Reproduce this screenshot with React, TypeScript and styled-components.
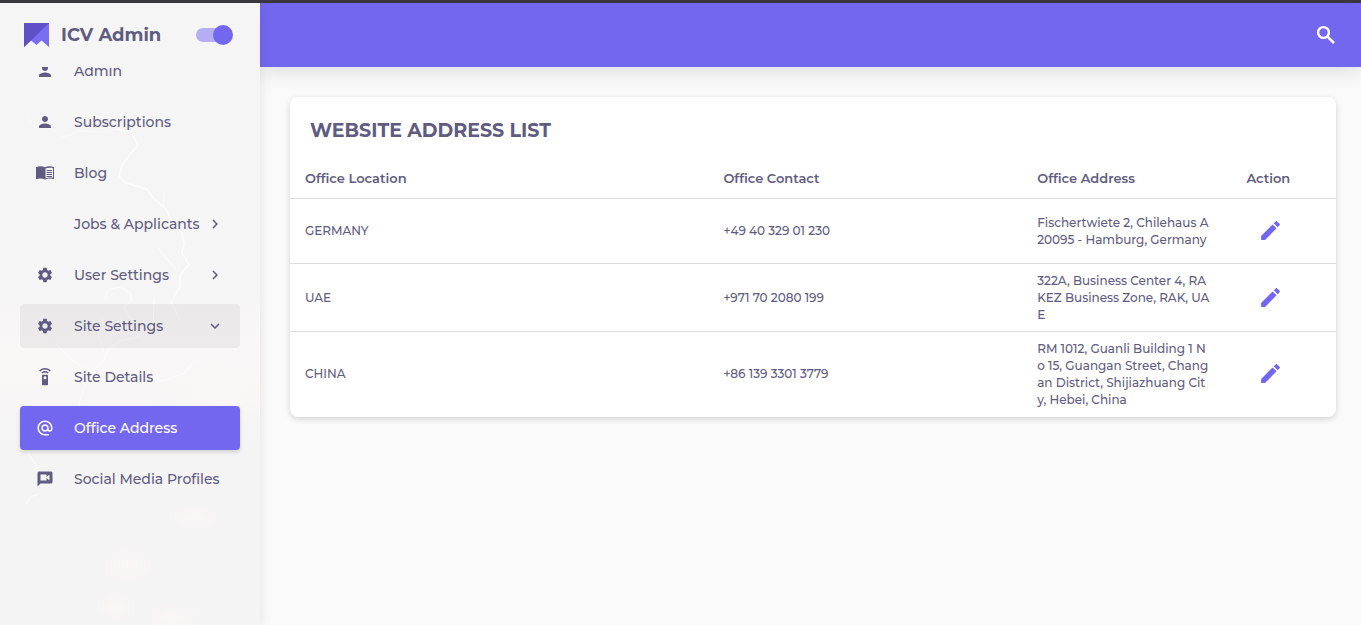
import React, { useState } from "react";
import styled, { createGlobalStyle, css } from "styled-components";
import {
  MdAlternateEmail,
  MdChevronRight,
  MdExpandMore,
  MdPerson,
  MdSettings,
} from "react-icons/md";

const violet = "#7467ef";
const ink = "#605c81";

const GlobalStyle = createGlobalStyle`
  *, *::before, *::after { box-sizing: border-box; }
  body {
    margin: 0;
    background: #fafafa;
    color: ${ink};
    font-family: Montserrat, Inter, "Open Sans", sans-serif;
    font-size: 13px;
  }
`;

const Page = styled.div`
  display: flex;
  min-height: 100vh;
  border-top: 3px solid #3b3a3e;
`;

const Sidebar = styled.aside`
  position: relative;
  flex: 0 0 260px;
  display: flex;
  flex-direction: column;
  overflow: hidden;
  background: #f5f5f5;
`;

const SidebarShell = styled.div`
  position: relative;
  z-index: 3;
  display: flex;
  flex: 0 0 260px;
  box-shadow: 0 2px 12px rgba(0, 0, 0, 0.1);
`;

const Backdrop = styled.svg`
  position: absolute;
  inset: 0;
  width: 100%;
  height: 100%;
`;

const Brand = styled.div`
  position: relative;
  display: flex;
  align-items: center;
  height: 64px;
  padding: 0 27px 0 24px;
`;

const BrandName = styled.span`
  flex: 1;
  padding-left: 12px;
  font-size: 18px;
  font-weight: 700;
  line-height: 24px;
`;

const Toggle = styled.input`
  appearance: none;
  position: relative;
  display: flex;
  align-items: center;
  width: 37px;
  height: 20px;
  margin: 0;
  cursor: pointer;

  &::before {
    content: "";
    width: 34px;
    height: 14px;
    border-radius: 7px;
    background: #b6aef2;
  }
  &::after {
    content: "";
    position: absolute;
    top: 0;
    left: 0;
    width: 20px;
    height: 20px;
    border-radius: 50%;
    background: ${violet};
  }
  &:checked::after {
    left: auto;
    right: 0;
  }
`;

const Nav = styled.nav`
  position: relative;
  flex: 1;
  overflow: hidden;
`;

const NavList = styled.ul`
  display: flex;
  flex-direction: column;
  gap: 7px;
  margin: -18px 0 0;
  padding: 0 20px;
  list-style: none;
`;

type NavState = "plain" | "open" | "active";

const navItem = css<{ $state: NavState }>`
  display: flex;
  align-items: center;
  width: 100%;
  height: 44px;
  padding: 0 16px;
  border: 0;
  border-radius: 4px;
  background: ${(p) =>
    p.$state === "active" ? violet : p.$state === "open" ? "rgba(0, 0, 0, 0.05)" : "transparent"};
  box-shadow: ${(p) => (p.$state === "active" ? "0 2px 4px rgba(0, 0, 0, 0.15)" : "none")};
  color: ${(p) => (p.$state === "active" ? "#fff" : ink)};
  font: inherit;
  font-size: 14px;
  font-weight: 500;
  line-height: 20px;
  text-align: left;
  text-decoration: none;
  white-space: nowrap;
  cursor: pointer;
`;

const NavLink = styled.a`
  ${navItem}
`;

const NavButton = styled.button`
  ${navItem}
`;

const NavIcon = styled.span`
  display: flex;
  justify-content: center;
  flex: 0 0 18px;
  margin-right: 20px;
`;

const NavLabel = styled.span`
  flex: 1;
`;

const Content = styled.div`
  flex: 1;
  min-width: 0;
`;

const TopBar = styled.header`
  display: flex;
  align-items: center;
  justify-content: flex-end;
  height: 64px;
  padding: 0 11px;
  background: ${violet};
  box-shadow: 0 4px 20px rgba(0, 0, 0, 0.12);
`;

const IconButton = styled.button`
  display: flex;
  align-items: center;
  justify-content: center;
  width: 48px;
  height: 48px;
  padding: 0;
  border: 0;
  border-radius: 50%;
  background: transparent;
  color: ${violet};
  cursor: pointer;
`;

const SearchButton = styled(IconButton)`
  color: #fff;
`;

const Main = styled.main`
  padding: 30px 25px 30px 30px;
`;

const Card = styled.section`
  overflow: hidden;
  border-radius: 8px;
  background: #fff;
  box-shadow: 0 2px 6px rgba(0, 0, 0, 0.16);
`;

const Title = styled.h1`
  margin: 0;
  padding: 20px 20px 13px;
  font-size: 19px;
  font-weight: 700;
  line-height: 28px;
  text-transform: uppercase;
`;

const Table = styled.table`
  width: 100%;
  table-layout: fixed;
  border-collapse: collapse;
  text-align: left;
`;

const HeadCell = styled.th<{ $width: string }>`
  width: ${(p) => p.$width};
  height: 40px;
  padding: 0 15px;
  border-bottom: 1px solid #dcdcdc;
  font-size: 13px;
  font-weight: 600;
`;

const Row = styled.tr`
  border-bottom: 1px solid #dcdcdc;

  &:last-child {
    border-bottom-color: transparent;
  }
`;

const Cell = styled.td`
  height: 65px;
  padding: 8px 15px;
  font-size: 12px;
  font-weight: 500;
  line-height: 17px;
  white-space: nowrap;
`;

const Line = styled.span`
  display: block;
`;

const Logo = () => (
  <svg width="25" height="24" viewBox="0 0 25 24" aria-hidden="true">
    <path d="M0 0H25V24L17.500 17.500L12.500 22L7 17.500L0 24Z" fill="#7b6df2" />
    <path d="M0 0H25L7 17.500L0 24Z" fill="#5f50c8" />
  </svg>
);

const OpenBook = () => (
  <svg width="18" height="14" viewBox="0 0 18 14" fill="currentColor" aria-hidden="true">
    <path d="M0 1.200C2.700 0 6.500 0 9 1.300C11.500 0 15.300 0 18 1.200V13.200C15.300 12.200 11.500 12.400 9 13.400C6.500 12.400 2.700 12.200 0 13.200Z" />
    <path d="M9.500 2.500C12 1.700 14.600 1.600 17 2.200V11.800C14.600 11.300 12 11.400 9.500 12.200Z" fill="#f5f5f5" />
    <path d="M10.500 4.500H16M10.500 6.500H16M10.500 8.500H16M10.500 10.500H16" stroke="currentColor" strokeWidth="1" />
  </svg>
);

const Magnifier = () => (
  <svg width="24" height="24" viewBox="0 0 24 24" fill="none" stroke="currentColor" aria-hidden="true">
    <circle cx="9.500" cy="9.500" r="5.400" strokeWidth="2.400" />
    <path d="M13.600 13.600L20 20" strokeWidth="2.600" />
  </svg>
);

const Pencil = () => (
  <svg width="25" height="25" viewBox="0 0 24 24" fill="currentColor" aria-hidden="true">
    <path d="M3 17.250V21h3.750L17.810 9.940l-3.750-3.750L3 17.250zM20.710 7.040c.39-.39.39-1.020 0-1.410l-2.340-2.340c-.39-.39-1.020-.39-1.410 0l-1.830 1.830 3.750 3.750 1.830-1.830z" />
  </svg>
);

const Remote = () => (
  <svg width="18" height="18" viewBox="0 0 24 24" fill="currentColor" aria-hidden="true">
    <path d="M15 9H9c-.55 0-1 .45-1 1v12c0 .55.45 1 1 1h6c.55 0 1-.45 1-1V10c0-.55-.45-1-1-1zm-3 6c-1.100 0-2-.9-2-2s.9-2 2-2 2 .9 2 2-.9 2-2 2zM7.050 6.050l1.410 1.410C9.370 6.560 10.620 6 12 6s2.630.56 3.540 1.460l1.410-1.410C15.680 4.780 13.930 4 12 4s-3.680.78-4.950 2.050zM12 0C8.960 0 6.210 1.230 4.220 3.220l1.410 1.410C7.260 3.010 9.510 2 12 2s4.740 1.010 6.360 2.640l1.410-1.410C17.790 1.230 15.040 0 12 0z" />
  </svg>
);

const VideoBubble = () => (
  <svg width="18" height="18" viewBox="0 0 24 24" fill="currentColor" aria-hidden="true">
    <path d="M20 2H4c-1.100 0-1.990.9-1.990 2L2 22l4-4h14c1.100 0 2-.9 2-2V4c0-1.100-.9-2-2-2zm-2 12l-4-3.200V14H6V6h8v3.200L18 6v8z" />
  </svg>
);

const Storm = () => (
  <Backdrop viewBox="0 0 260 622" preserveAspectRatio="xMidYMin slice" aria-hidden="true">
    <defs>
      <radialGradient id="glow">
        <stop offset="0" stopColor="#fcf7f6" stopOpacity="0.8" />
        <stop offset="1" stopColor="#fbf6f5" stopOpacity="0" />
      </radialGradient>
      <linearGradient id="haze" x2="0" y2="1">
        <stop offset="0.4" stopColor="#faf7f7" stopOpacity="0" />
        <stop offset="0.58" stopColor="#faf7f7" stopOpacity="0.9" />
        <stop offset="0.72" stopColor="#f4f4f4" />
      </linearGradient>
    </defs>
    <rect width="260" height="622" fill="url(#haze)" />
    <ellipse cx="218" cy="390" rx="70" ry="36" fill="url(#glow)" />
    <ellipse cx="10" cy="365" rx="90" ry="34" fill="url(#glow)" />
    <ellipse cx="128" cy="562" rx="32" ry="24" fill="url(#glow)" />
    <ellipse cx="116" cy="604" rx="24" ry="20" fill="url(#glow)" />
    <ellipse cx="172" cy="614" rx="34" ry="18" fill="url(#glow)" />
    <ellipse cx="195" cy="515" rx="34" ry="16" fill="url(#glow)" />
    <g fill="none" stroke="#fff" strokeLinejoin="round" strokeOpacity="0.7">
      <path
        strokeOpacity="0.4"
        d="M28 114L33 124L50 125L62 134L72 132L76 128L100 129L118 126"
      />
      <path
        strokeWidth="1.500"
        d="M118 126L132 130L138 142L131 150L122 162L119 173L126 180L147 186L153 195L166 206L172 219L182 230L184 240L182 250L189 261L180 272L180 284L174 293L170 302"
      />
      <path d="M104 298L108 287L120 284L130 290L131 298L124 304L128 314L140 320L139 334L120 338L108 346L104 358L92 368L82 364L66 352L54 338M103 312L98 330L104 350M92 368L84 384L80 398L76 412" />
      <path d="M154 297L153 325M172 300L180 318M195 357L184 370L164 378L150 376M28 450L36 462L40 472M26 502L30 494L39 491M158 245L166 255L176 266M120 114L124 108M163 203L165 190" />
    </g>
  </Backdrop>
);

interface NavEntry {
  label: string;
  icon?: React.ReactNode;
  state?: NavState;
  group?: boolean;
}

const navEntries: NavEntry[] = [
  { label: "Admin", icon: <MdPerson size={18} /> },
  { label: "Subscriptions", icon: <MdPerson size={18} /> },
  { label: "Blog", icon: <OpenBook /> },
  { label: "Jobs & Applicants", group: true },
  { label: "User Settings", icon: <MdSettings size={18} />, group: true },
  { label: "Site Settings", icon: <MdSettings size={18} />, group: true, state: "open" },
  { label: "Site Details", icon: <Remote /> },
  { label: "Office Address", icon: <MdAlternateEmail size={18} />, state: "active" },
  { label: "Social Media Profiles", icon: <VideoBubble /> },
];

const offices = [
  {
    location: "GERMANY",
    contact: "+49 40 329 01 230",
    address: ["Fischertwiete 2, Chilehaus A", "20095 - Hamburg, Germany"],
  },
  {
    location: "UAE",
    contact: "+971 70 2080 199",
    address: ["322A, Business Center 4, RA", "KEZ Business Zone, RAK, UA", "E"],
  },
  {
    location: "CHINA",
    contact: "+86 139 3301 3779",
    address: [
      "RM 1012, Guanli Building 1 N",
      "o 15, Guangan Street, Chang",
      "an District, Shijiazhuang Cit",
      "y, Hebei, China",
    ],
  },
];

function NavRow({ label, icon, state = "plain", group }: NavEntry) {
  const body = (
    <>
      <NavIcon>{icon}</NavIcon>
      <NavLabel>{label}</NavLabel>
    </>
  );
  return (
    <li>
      {group ? (
        <NavButton type="button" $state={state} aria-expanded={state === "open"}>
          {body}
          {state === "open" ? <MdExpandMore size={18} /> : <MdChevronRight size={18} />}
        </NavButton>
      ) : (
        <NavLink href="#" $state={state} aria-current={state === "active" ? "page" : undefined}>
          {body}
        </NavLink>
      )}
    </li>
  );
}

export default function App() {
  const [pinned, setPinned] = useState(true);
  return (
    <>
      <GlobalStyle />
      <Page>
        <SidebarShell>
          <Sidebar>
            <Storm />
            <Brand>
              <Logo />
              <BrandName>ICV Admin</BrandName>
              <Toggle
                type="checkbox"
                aria-label="Keep sidebar open"
                checked={pinned}
                onChange={(e) => setPinned(e.target.checked)}
              />
            </Brand>
            <Nav>
              <NavList>
                {navEntries.map((entry) => (
                  <NavRow key={entry.label} {...entry} />
                ))}
              </NavList>
            </Nav>
          </Sidebar>
        </SidebarShell>
        <Content>
          <TopBar>
            <SearchButton type="button" aria-label="Search">
              <Magnifier />
            </SearchButton>
          </TopBar>
          <Main>
            <Card>
              <Title>Website Address List</Title>
              <Table>
                <thead>
                  <tr>
                    <HeadCell $width="40%">Office Location</HeadCell>
                    <HeadCell $width="30%">Office Contact</HeadCell>
                    <HeadCell $width="20%">Office Address</HeadCell>
                    <HeadCell $width="10%">Action</HeadCell>
                  </tr>
                </thead>
                <tbody>
                  {offices.map((office) => (
                    <Row key={office.location}>
                      <Cell>{office.location}</Cell>
                      <Cell>{office.contact}</Cell>
                      <Cell>
                        {office.address.map((line) => (
                          <Line key={line}>{line}</Line>
                        ))}
                      </Cell>
                      <Cell>
                        <IconButton type="button" aria-label={`Edit ${office.location}`}>
                          <Pencil />
                        </IconButton>
                      </Cell>
                    </Row>
                  ))}
                </tbody>
              </Table>
            </Card>
          </Main>
        </Content>
      </Page>
    </>
  );
}
